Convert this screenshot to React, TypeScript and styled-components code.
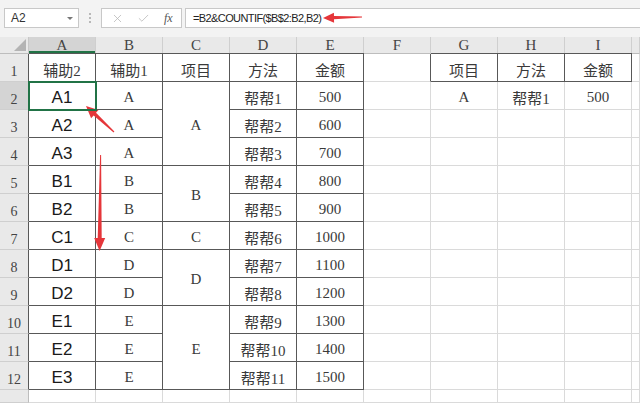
import React from 'react';
import styled, { createGlobalStyle } from 'styled-components';
import { X, Check } from 'lucide-react';

const GlobalStyle = createGlobalStyle`
  html, body { margin: 0; padding: 0; background: #fff; overflow: hidden; }
`;

const DARK = '#585858';
const LIGHT = '#dadada';
const HEAD_BG = '#e9e9e9';
const SEL_BG = '#d4d4d4';
const GREEN = '#217346';
const SERIF = `"Liberation Serif", "Noto Sans CJK SC", serif`;
const SANS = `"Liberation Sans", Arial, sans-serif`;

const Wrap = styled.div`
  position: relative;
  width: 640px;
  height: 403px;
  display: flex;
  flex-direction: column;
  overflow: hidden;
  background: #fff;
`;

const FormulaBar = styled.div`
  height: 37px;
  flex: none;
  display: flex;
  align-items: flex-start;
  padding: 8px 0 0 4px;
  box-sizing: border-box;
  background: #f3f3f3;
  font-family: ${SANS};
`;

const NameBox = styled.div`
  width: 75px;
  height: 20px;
  box-sizing: border-box;
  border: 1px solid #c8c8c8;
  background: #fff;
  display: flex;
  align-items: center;
  justify-content: space-between;
  padding: 0 5px 0 6px;
  font-size: 12px;
  color: #333;
`;

const Caret = styled.span`
  width: 0;
  height: 0;
  border-left: 3px solid transparent;
  border-right: 3px solid transparent;
  border-top: 3px solid #777;
`;

const Dots = styled.div`
  width: 22px;
  height: 20px;
  display: flex;
  flex-direction: column;
  align-items: center;
  justify-content: center;
  gap: 2px;
  span {
    width: 2px;
    height: 2px;
    background: #b8b8b8;
  }
`;

const FxBox = styled.div`
  width: 81px;
  height: 20px;
  box-sizing: border-box;
  border: 1px solid #c8c8c8;
  background: #fff;
  display: flex;
  align-items: center;
  padding-left: 9px;
  gap: 13px;
  color: #b5b5b5;
`;

const Fx = styled.span`
  font-family: ${SERIF};
  font-style: italic;
  font-size: 12px;
  color: #555;
  margin-left: 1px;
`;

const FormulaInput = styled.div`
  flex: 1;
  height: 20px;
  margin-left: 3px;
  box-sizing: border-box;
  border: 1px solid #c8c8c8;
  border-right: none;
  background: #fff;
  display: flex;
  align-items: center;
  padding-left: 7px;
  font-size: 11px;
  letter-spacing: -0.6px;
  color: #222;
`;

const Sheet = styled.div`
  flex: 1;
  display: grid;
  grid-template-columns: 29px repeat(9, 67px) 1fr;
  grid-template-rows: 17px repeat(12, 28px) 1fr;
`;

const Corner = styled.div`
  position: relative;
  background: ${HEAD_BG};
  border-right: 1px solid #c8c8c8;
  border-bottom: 1px solid #bdbdbd;
  box-sizing: border-box;
  &::after {
    content: '';
    position: absolute;
    right: 2px;
    bottom: 2px;
    border-left: 12px solid transparent;
    border-bottom: 12px solid #b4b4b4;
  }
`;

const ColHead = styled.div<{ $sel?: boolean }>`
  background: ${(p) => (p.$sel ? SEL_BG : HEAD_BG)};
  border-right: 1px solid #cfcfcf;
  border-bottom: 1px solid #bdbdbd;
  box-shadow: ${(p) => (p.$sel ? `inset 0 -2px 0 ${GREEN}` : 'none')};
  box-sizing: border-box;
  display: flex;
  align-items: center;
  justify-content: center;
  font-family: ${SERIF};
  font-size: 15px;
  color: #444;
`;

const RowHead = styled.div<{ $sel?: boolean; $edge?: boolean }>`
  background: ${(p) => (p.$sel ? SEL_BG : HEAD_BG)};
  border-right: 1px solid ${(p) => (p.$edge ? DARK : '#bdbdbd')};
  border-bottom: 1px solid #cfcfcf;
  box-sizing: border-box;
  display: flex;
  align-items: flex-end;
  justify-content: center;
  font-family: ${SERIF};
  font-size: 14px;
  line-height: 1;
  padding-bottom: 2px;
  color: #444;
`;

const Cell = styled.div<{
  $r?: boolean;
  $b?: boolean;
  $t?: boolean;
  $span?: number;
  $sans?: boolean;
  $active?: boolean;
}>`
  grid-row: span ${(p) => p.$span || 1};
  border-right: 1px solid ${(p) => (p.$r ? DARK : LIGHT)};
  border-bottom: 1px solid ${(p) => (p.$b ? DARK : LIGHT)};
  box-shadow: ${(p) => (p.$t ? `0 -1px 0 ${DARK}` : 'none')};
  box-sizing: border-box;
  display: flex;
  align-items: center;
  justify-content: center;
  padding-top: ${(p) => (p.$sans ? 5 : 4)}px;
  font-family: ${(p) => (p.$sans ? SANS : SERIF)};
  font-size: ${(p) => (p.$sans ? 17 : 15)}px;
  color: ${(p) => (p.$sans ? '#1a1a1a' : '#3a3a3a')};
  white-space: nowrap;
  ${(p) =>
    p.$active &&
    `position: relative; z-index: 1; outline: 2px solid ${GREEN}; outline-offset: -1px;`}
`;

const Overlay = styled.svg`
  position: absolute;
  left: 0;
  top: 0;
  pointer-events: none;
`;

type Row = {
  a: string;
  b: string;
  c?: { text: string; span: number };
  d: string;
  e: string;
  g?: string;
  h?: string;
  i?: string;
};

const rows: Row[] = [
  { a: '辅助2', b: '辅助1', c: { text: '项目', span: 1 }, d: '方法', e: '金额', g: '项目', h: '方法', i: '金额' },
  { a: 'A1', b: 'A', c: { text: 'A', span: 3 }, d: '帮帮1', e: '500', g: 'A', h: '帮帮1', i: '500' },
  { a: 'A2', b: 'A', d: '帮帮2', e: '600' },
  { a: 'A3', b: 'A', d: '帮帮3', e: '700' },
  { a: 'B1', b: 'B', c: { text: 'B', span: 2 }, d: '帮帮4', e: '800' },
  { a: 'B2', b: 'B', d: '帮帮5', e: '900' },
  { a: 'C1', b: 'C', c: { text: 'C', span: 1 }, d: '帮帮6', e: '1000' },
  { a: 'D1', b: 'D', c: { text: 'D', span: 2 }, d: '帮帮7', e: '1100' },
  { a: 'D2', b: 'D', d: '帮帮8', e: '1200' },
  { a: 'E1', b: 'E', c: { text: 'E', span: 3 }, d: '帮帮9', e: '1300' },
  { a: 'E2', b: 'E', d: '帮帮10', e: '1400' },
  { a: 'E3', b: 'E', d: '帮帮11', e: '1500' },
];

const cols = ['A', 'B', 'C', 'D', 'E', 'F', 'G', 'H', 'I', ''];

// tapered arrow polygon, tail -> tip
const arrow = (tx: number, ty: number, px: number, py: number, head: number, half: number, w0: number, w1: number) => {
  const len = Math.hypot(px - tx, py - ty);
  const ux = (px - tx) / len;
  const uy = (py - ty) / len;
  const nx = -uy;
  const ny = ux;
  const bx = px - ux * head;
  const by = py - uy * head;
  const pts = [
    [tx + nx * w0, ty + ny * w0],
    [bx + nx * w1, by + ny * w1],
    [bx + nx * half, by + ny * half],
    [px, py],
    [bx - nx * half, by - ny * half],
    [bx - nx * w1, by - ny * w1],
    [tx - nx * w0, ty - ny * w0],
  ];
  return pts.map((p) => p.map((v) => v.toFixed(1)).join(',')).join(' ');
};

function App() {
  return (
    <Wrap>
      <GlobalStyle />
      <FormulaBar>
        <NameBox>
          A2
          <Caret />
        </NameBox>
        <Dots>
          <span />
          <span />
          <span />
        </Dots>
        <FxBox>
          <X size={13} strokeWidth={1.4} />
          <Check size={13} strokeWidth={1.4} />
          <Fx>fx</Fx>
        </FxBox>
        <FormulaInput>=B2&amp;COUNTIF($B$2:B2,B2)</FormulaInput>
      </FormulaBar>

      <Sheet>
        <Corner />
        {cols.map((c, i) => (
          <ColHead key={i} $sel={c === 'A'}>
            {c}
          </ColHead>
        ))}

        {rows.map((r, i) => {
          const first = i === 0;
          return (
            <React.Fragment key={i}>
              <RowHead $sel={i === 1} $edge>
                {i + 1}
              </RowHead>
              <Cell $r $b $t={first} $sans={!first} $active={i === 1}>
                {r.a}
              </Cell>
              <Cell $r $b $t={first}>
                {r.b}
              </Cell>
              {r.c && (
                <Cell $r $b $t={first} $span={r.c.span}>
                  {r.c.text}
                </Cell>
              )}
              <Cell $r $b $t={first}>
                {r.d}
              </Cell>
              <Cell $r $b $t={first}>
                {r.e}
              </Cell>
              <Cell $r={first} />
              <Cell $r={first} $b={first} $t={first}>
                {r.g}
              </Cell>
              <Cell $r={first} $b={first} $t={first}>
                {r.h}
              </Cell>
              <Cell $r={first} $b={first} $t={first}>
                {r.i}
              </Cell>
              <Cell />
            </React.Fragment>
          );
        })}

        <RowHead />
        {cols.map((_, i) => (
          <Cell key={i} />
        ))}
      </Sheet>

      <Overlay width={640} height={403} viewBox="0 0 640 403">
        <g fill="#e5363a">
          <polygon points={arrow(362, 17, 323, 18, 11, 5, 0.6, 1.6)} />
          <polygon points={arrow(114, 132, 86, 106, 12, 5.5, 0.6, 1.8)} />
          <polygon points={arrow(100.6, 155, 99.6, 251, 13, 5.5, 0.5, 2)} />
        </g>
      </Overlay>
    </Wrap>
  );
}

export default App;
